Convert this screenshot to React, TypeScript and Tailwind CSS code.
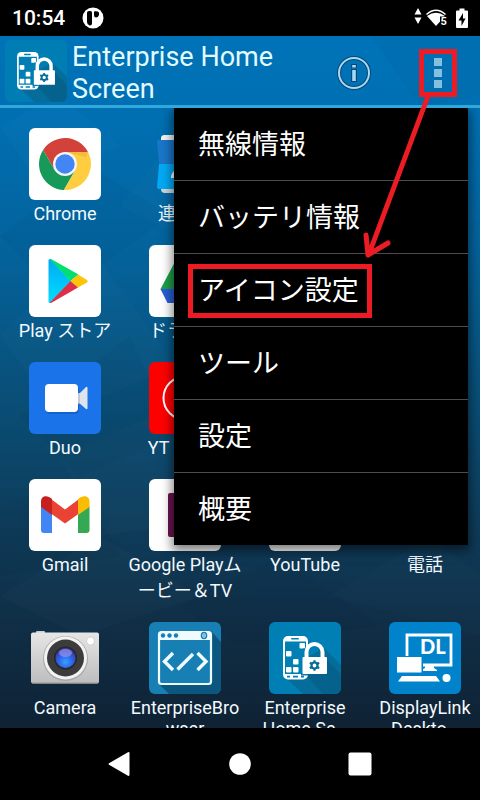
import type { ReactNode } from "react";

const RED = "#ed1c24";

function HomeScreenGlyph() {
  return (
    <g>
      <path d="M55 26 72 43V72H34L16 55 30 40Z" fill="#066d9b" />
      <path d="M58 38 72 52V72H54L36 52Z" fill="#04587d" opacity="0.5" />
      <rect x="14" y="14" width="25" height="43.500" rx="5" fill="#fff" />
      <path d="M16 19.500H37V52H16Z" fill="#007fb4" />
      <rect x="22" y="16" width="8" height="1.600" rx="0.800" fill="#007fb4" />
      <path d="M18 54.600H21M24 54.600H29M32 54.600H35" stroke="#007fb4" strokeWidth="1.600" />
      <g fill="#fff">
        <rect x="30.500" y="21" width="5.500" height="5.500" rx="1" />
        <rect x="17" y="29" width="5.500" height="5.500" rx="1" />
        <rect x="24" y="37" width="5.500" height="5.500" rx="1" />
        <rect x="17" y="45" width="5.500" height="5.500" rx="1" />
        <rect x="24" y="45" width="5.500" height="5.500" rx="1" />
      </g>
      <path d="M34 26.500H40V36H34ZM32 34H34V52.500H32ZM32 52H39V53.500H32Z" fill="#007fb4" />
      <path d="M37.500 36V30a8 8 0 0 1 16 0V36" fill="none" stroke="#fff" strokeWidth="4" />
      <rect x="33.500" y="35" width="24.500" height="17" rx="1" fill="#fff" />
      <circle cx="45.500" cy="43.500" r="3" fill="none" stroke="#066d9b" strokeWidth="2.200" />
      <path
        d="M45.500 38.200V40M45.500 47V48.800M40.900 40.800 42.500 41.800M48.500 45.200 50.100 46.200M40.900 46.200 42.500 45.200M48.500 41.800 50.100 40.800"
        stroke="#066d9b"
        strokeWidth="2.200"
      />
    </g>
  );
}

function Tile({ color, children }: { color: string; children?: ReactNode }) {
  return (
    <svg viewBox="0 0 72 72" className="size-[72px] shrink-0 rounded-md" aria-hidden="true">
      <rect width="72" height="72" fill={color} />
      {children}
    </svg>
  );
}

const chrome = (
  <Tile color="#fff">
    <path d="M59 24A26 26 0 0 0 14.100 22L25.600 42 36 36V24Z" fill="#d3423a" />
    <path d="M14.100 22A26 26 0 0 0 34.900 62L46.400 42 36 36 25.600 42Z" fill="#17995a" />
    <path d="M34.900 62A26 26 0 0 0 59 24H36V36L46.400 42Z" fill="#ffcd40" />
    <path d="M36 24H59L57 29Z" fill="#e9a93a" opacity="0.5" />
    <circle cx="36" cy="36" r="12" fill="#f4f4f4" />
    <circle cx="36" cy="36" r="9.700" fill="#4285f4" />
  </Tile>
);

const contacts = (
  <Tile color="transparent">
    <rect x="12" y="7" width="48" height="58" rx="4" fill="#cfd8dc" />
    <path d="M12 11a4 4 0 0 1 4-4H56V12H12Z" fill="#f4f4f4" />
    <path d="M8 14q0-2 2-2H62q2 0 2 2L62 36H10Z" fill="#1a76c9" />
    <path d="M10 36H62L64 59q0 2-2 2H10q-2 0-2-2Z" fill="#03a9f4" />
    <circle cx="36" cy="30" r="8" fill="#fff" />
    <path d="M22 50q0-10 14-10t14 10Z" fill="#fff" />
  </Tile>
);

const play = (
  <Tile color="#fff">
    <defs>
      <linearGradient id="playBlue" x1="0" y1="0" x2="0" y2="1">
        <stop offset="0" stopColor="#00a8f5" />
        <stop offset="1" stopColor="#00dfff" />
      </linearGradient>
    </defs>
    <path d="M19.500 15.500q0-1.500 1.500-1.500L42 36 21 58q-1.500 0-1.500-1.500Z" fill="url(#playBlue)" />
    <path d="M20.500 14q1-.5 2 .2L49.500 29.500 41.500 36Z" fill="#00e071" />
    <path d="M49 29.500 58 35q1.500 1.200 0 2.500L49 42.500 41.500 36Z" fill="#fdc50a" />
    <path d="M20.500 58q1 .3 2-.2L49 42.500 41.500 36Z" fill="#de2f48" />
  </Tile>
);

const drive = (
  <Tile color="#fff">
    <path d="M28 13H44L36 28 20 57 11.500 44Z" fill="#1e9e4a" />
    <path d="M28 13H44L61 44H45Z" fill="#ffcd40" />
    <path d="M11.500 44H61L53 58H18.500Z" fill="#2a5fd8" />
  </Tile>
);

const duo = (
  <Tile color="#1a73e8">
    <rect x="17" y="24" width="33" height="28" rx="4" fill="#1257b5" opacity="0.6" />
    <path d="M49 33 57 25q1.500-1 1.500 1V46q0 2-1.500 1L49 40Z" fill="#e1e3ea" />
    <rect x="16" y="22" width="33" height="28" rx="4" fill="#fff" />
    <path d="M49 31V42L51 41V31Z" fill="#c3c8d4" />
  </Tile>
);

const ytMusic = (
  <Tile color="#f00">
    <circle cx="36" cy="36" r="21.500" fill="none" stroke="#fff" strokeWidth="2" />
    <path d="M30 26 46 36 30 46Z" fill="#fff" />
  </Tile>
);

const gmail = (
  <Tile color="#fff">
    <path d="M12 27 23 35V54H15q-3 0-3-3Z" fill="#4285f4" />
    <path d="M60.500 27 49 35V54H57.500q3 0 3-3Z" fill="#34a853" />
    <path d="M22 20 36 30.500 50 20V34.500L36 44.500 22 34.500Z" fill="#ea4335" />
    <path d="M12 28V22.500C12 17 18 15.500 23 20V36Z" fill="#c5221f" />
    <path d="M60.500 28V22.500C60.500 17 54 15.500 49 20V36Z" fill="#fbbc04" />
  </Tile>
);

const movies = (
  <Tile color="#fff">
    <path d="M21 14H51V58H21q-2 0-2-2V16q0-2 2-2Z" fill="#6a1450" />
    <path d="M30 26 44 36 30 46Z" fill="#fff" />
  </Tile>
);

const youtube = (
  <Tile color="#fff">
    <rect x="9" y="18" width="54" height="37" rx="9" fill="#f00" />
    <path d="M31 28 45 36 31 44Z" fill="#fff" />
  </Tile>
);

const phone = (
  <svg viewBox="0 0 72 72" className="size-[72px] shrink-0" aria-hidden="true">
    <circle cx="36" cy="34" r="28" fill="#2a7de1" />
  </svg>
);

const camera = (
  <Tile color="transparent">
    <defs>
      <linearGradient id="camBody" x1="0" y1="0" x2="0" y2="1">
        <stop offset="0" stopColor="#e6e6e6" />
        <stop offset="1" stopColor="#bdbdbd" />
      </linearGradient>
      <radialGradient id="camLens" cx="0.500" cy="0.700" r="0.600">
        <stop offset="0" stopColor="#38a0ff" />
        <stop offset="0.600" stopColor="#2c62e8" />
        <stop offset="1" stopColor="#3a3fae" />
      </radialGradient>
    </defs>
    <rect x="7" y="9" width="9" height="4" rx="1" fill="#cfcfcf" />
    <rect x="2" y="10.500" width="68" height="51" rx="2" fill="url(#camBody)" />
    <path d="M3 61H69" stroke="#999" />
    <circle cx="36.500" cy="36.500" r="22.500" fill="#a8a8a8" />
    <circle cx="36.500" cy="36" r="21.500" fill="#f2f2f2" />
    <circle cx="36.500" cy="36" r="18.500" fill="#3c3c3c" />
    <circle cx="36.500" cy="36" r="11.500" fill="#27272c" />
    <circle cx="36.500" cy="36" r="10" fill="url(#camLens)" />
    <ellipse cx="36.500" cy="31" rx="6.500" ry="4" fill="#a9a0ec" opacity="0.6" />
    <circle cx="61.500" cy="19" r="4" fill="#fff" stroke="#c9c9c9" strokeWidth="0.800" />
  </Tile>
);

const browser = (
  <Tile color="#187fb4">
    <path d="M62 9 72 20V72H20L9 61Z" fill="#0c5780" />
    <rect x="10" y="10" width="52" height="52" rx="2.500" fill="#187fb4" stroke="#f0fbff" strokeWidth="2.200" />
    <path d="M10 10H62V18H10Z" fill="#f0fbff" />
    <g fill="#187fb4">
      <circle cx="14" cy="13.500" r="2.200" />
      <circle cx="20.500" cy="13.500" r="2.200" />
      <circle cx="27" cy="13.500" r="2.200" />
    </g>
    <ellipse cx="55" cy="13.500" rx="2.500" ry="3" fill="none" stroke="#187fb4" strokeWidth="1.600" />
    <path d="M55 12V15" stroke="#187fb4" />
    <path
      d="M24 31 15.500 39.500 24 48M44 32 28.500 47.500M48.500 31 57 39.500 48.500 48"
      fill="none"
      stroke="#f0fbff"
      strokeWidth="3.400"
    />
  </Tile>
);

const homeScreen = (
  <Tile color="#007fb4">
    <HomeScreenGlyph />
  </Tile>
);

const displayLink = (
  <Tile color="#0083ca">
    <path d="M18 34V13H62V43H34" fill="none" stroke="#fff" strokeWidth="2.800" />
    <text x="31" y="32" fontFamily="Lato, 'Open Sans', sans-serif" fontWeight="900" fontSize="20" fill="#fff">
      DL
    </text>
    <rect x="8" y="35" width="24.500" height="15.500" fill="#fff" />
    <path d="M36 43H45V46L48 48V49H34V47L36 46Z" fill="#fff" />
    <path d="M13 54H47L51 59.500H9Z" fill="#fff" />
    <circle cx="57.500" cy="56" r="4" fill="#fff" />
  </Tile>
);

type App = { lines: string[]; icon: ReactNode; place?: string; tight?: boolean };

const apps: App[] = [
  { lines: ["Chrome"], icon: chrome },
  { lines: ["連絡先"], icon: contacts },
  { lines: ["Play ストア"], icon: play, place: "col-start-1" },
  { lines: ["ドライブ"], icon: drive },
  { lines: ["Duo"], icon: duo, place: "col-start-1" },
  { lines: ["YT Music"], icon: ytMusic },
  { lines: ["Gmail"], icon: gmail, place: "col-start-1" },
  { lines: ["Google Playム", "ービー＆TV"], icon: movies },
  { lines: ["YouTube"], icon: youtube },
  { lines: ["電話"], icon: phone },
  { lines: ["Camera"], icon: camera, tight: true },
  { lines: ["EnterpriseBro", "wser"], icon: browser, tight: true },
  { lines: ["Enterprise", "Home Se…"], icon: homeScreen, tight: true },
  { lines: ["DisplayLink", "Deskto…"], icon: displayLink, tight: true },
];

const menuItems = ["無線情報", "バッテリ情報", "アイコン設定", "ツール", "設定", "概要"];

function Wallpaper() {
  return (
    <svg
      viewBox="0 0 480 692"
      preserveAspectRatio="none"
      className="absolute inset-0 size-full"
      aria-hidden="true"
    >
      <g fill="#fff" opacity="0.012">
        <path d="M0 90 60 60 120 110 40 150Z" />
        <path d="M120 170 200 70 480 180 300 260Z" />
        <path d="M0 300 90 210 175 330 60 380Z" />
        <path d="M60 420 175 370 240 480 100 500Z" />
        <path d="M0 560 100 500 200 560 80 600Z" />
        <path d="M330 560 430 500 480 540V600Z" />
      </g>
      <g fill="#000" opacity="0.025">
        <path d="M0 200 90 130 170 180 60 260Z" />
        <path d="M20 380 130 300 175 400 80 440Z" />
        <path d="M0 470 80 440 120 520 0 540Z" />
        <path d="M180 570 280 520 380 590 240 610Z" />
        <path d="M370 0 480 0V60L420 70Z" />
      </g>
    </svg>
  );
}

export default function App() {
  return (
    <div className="relative flex h-dvh flex-col overflow-hidden bg-black font-[Roboto,'Noto_Sans_CJK_JP',sans-serif] text-white">
      <div className="flex h-9 shrink-0 items-center px-3">
        <span className="text-[21px] font-medium leading-9">10:54</span>
        <svg viewBox="0 0 22 22" className="ml-[17px] size-[22px]" aria-hidden="true">
          <circle cx="11" cy="11" r="10.500" fill="#fff" />
          <path d="M5 5.500q0-1.500 2-1.500h1.500q1.500 0 1.500 1.500V17q-.5 1.500-2.500 1.500Q5 17.500 5 15Z" fill="#000" />
          <path d="M12 4.500q3-1 5 1v2.500q-1 2.500-3 2.500-2 0-2-2.500Z" fill="#000" />
        </svg>
        <svg viewBox="0 0 8 18" className="mb-1 ml-auto h-[18px] w-2" aria-hidden="true">
          <path d="M4 1 7.500 7.500H.5ZM4 17 7.500 10.500H.5Z" fill="#fff" />
        </svg>
        <svg viewBox="0 0 24 20" className="ml-[3px] h-5 w-6" aria-hidden="true">
          <path d="M1.500 6.500Q11 -2 20.500 6.500" fill="none" stroke="#fff" strokeWidth="1.600" />
          <path d="M2 8Q11 1.500 20 8L11 18Z" fill="#fff" />
          <path d="M15 8.500H24V20H15Z" fill="#000" />
          <text x="15.500" y="17" fontFamily="Roboto, sans-serif" fontSize="11" fontWeight="700" fill="#fff">
            5
          </text>
        </svg>
        <svg viewBox="0 0 12 20" className="ml-[7px] h-5 w-3" aria-hidden="true">
          <path d="M3.500 0.500H8.500V2.500H11q1 0 1 1V19q0 1-1 1H1q-1 0-1-1V3.500q0-1 1-1H3.500Z" fill="#fff" />
          <path d="M7 5 2.500 12.500H5.500V18L9.500 10.500H7Z" fill="#000" />
        </svg>
      </div>

      <div className="relative flex min-h-0 flex-1 flex-col bg-[linear-gradient(to_bottom,#0073b8_0%,#006fb2_12%,#04629a_32%,#094f78_52%,#0d4060_67%,#103049_83%,#0f2234_100%)]">
        <Wallpaper />
        <header className="relative flex h-[72px] shrink-0 items-center border-b-[3px] border-[#31a8dc] pl-[5px]">
          <svg viewBox="0 0 72 72" className="size-[62px] shrink-0 rounded-md" aria-hidden="true">
            <rect width="72" height="72" fill="#007db3" />
            <HomeScreenGlyph />
          </svg>
          <h1 className="ml-[5px] flex-1 pr-10 pt-1 text-[27px] leading-8 text-[#e2fbff]">Enterprise Home Screen</h1>
          <button type="button" aria-label="情報" className="mr-12 mt-1 shrink-0">
            <svg viewBox="0 0 34 34" className="size-[34px]" aria-hidden="true">
              <circle cx="17" cy="17" r="15" fill="none" stroke="#064a78" strokeWidth="4" />
              <circle cx="17" cy="17" r="15" fill="none" stroke="#a9d8f2" strokeWidth="2" />
              <path d="M17 8V12M17 13V26" stroke="#064a78" strokeWidth="6" />
              <path d="M17 9V11.500M17 14V25" stroke="#a9d8f2" strokeWidth="3.600" />
            </svg>
          </button>
          <button
            type="button"
            aria-label="メニュー"
            className="mr-[23px] mt-1 flex h-12 w-[38px] shrink-0 flex-col items-center justify-center gap-[3px] border-[5px] border-[#ed1c24]"
          >
            <span className="size-2 bg-[#84bfdf]" />
            <span className="size-2 bg-[#84bfdf]" />
            <span className="size-2 bg-[#84bfdf]" />
          </button>
        </header>

        <main className="relative min-h-0 flex-1 overflow-hidden">
          <div className="grid grid-cols-4 gap-x-2.5 gap-y-[18px] pl-2.5 pt-5 text-[#f2faff]">
            {apps.map((app) => (
              <button
                key={app.lines[0]}
                type="button"
                className={`flex flex-col items-center whitespace-nowrap text-lg ${app.place ?? ""}`}
              >
                {app.icon}
                <span className={app.tight ? "mt-[3px] leading-[21px]" : "mt-px leading-[26px]"}>
                  {app.lines.map((line) => (
                    <span key={line} className="flex justify-center">
                      {line}
                    </span>
                  ))}
                </span>
              </button>
            ))}
          </div>

          <ul className="absolute right-3 top-0 w-[294px] divide-y divide-[#4d4d4d] bg-black shadow-[0_4px_10px_2px_rgba(0,0,0,0.5)]">
            {menuItems.map((item, i) => (
              <li key={item} className="relative">
                <button type="button" className="block h-[72px] w-full px-6 pt-0.5 text-left text-[27px] leading-[70px]">
                  {item}
                </button>
                {i === 2 && (
                  <span className="pointer-events-none absolute left-3.5 top-2.5 h-[54px] w-[184px] border-[5px] border-[#ed1c24]" />
                )}
              </li>
            ))}
          </ul>
        </main>
      </div>

      <nav className="flex h-[72px] shrink-0 items-center justify-center gap-24">
        <button type="button" aria-label="戻る">
          <svg viewBox="0 0 24 24" className="size-6" aria-hidden="true">
            <path d="M1 11.200 20 .2q1.500-.5 1.500 1V22.800q0 1.500-1.500 1L1 12.800q-1-.8 0-1.600Z" fill="#fff" />
          </svg>
        </button>
        <button type="button" aria-label="ホーム">
          <svg viewBox="0 0 24 24" className="size-6" aria-hidden="true">
            <circle cx="12" cy="12" r="10.800" fill="#fff" />
          </svg>
        </button>
        <button type="button" aria-label="履歴">
          <svg viewBox="0 0 24 24" className="size-6" aria-hidden="true">
            <rect x="0.500" y="0.500" width="23" height="23" rx="2" fill="#fff" />
          </svg>
        </button>
      </nav>

      <svg
        viewBox="0 0 75 170"
        className="pointer-events-none absolute right-[45px] top-[92px] h-[170px] w-[75px]"
        aria-hidden="true"
      >
        <path
          d="M68 4 9 162M6 143 8 163 28 151"
          fill="none"
          stroke={RED}
          strokeWidth="5"
          strokeLinecap="round"
          strokeLinejoin="round"
        />
      </svg>
    </div>
  );
}
